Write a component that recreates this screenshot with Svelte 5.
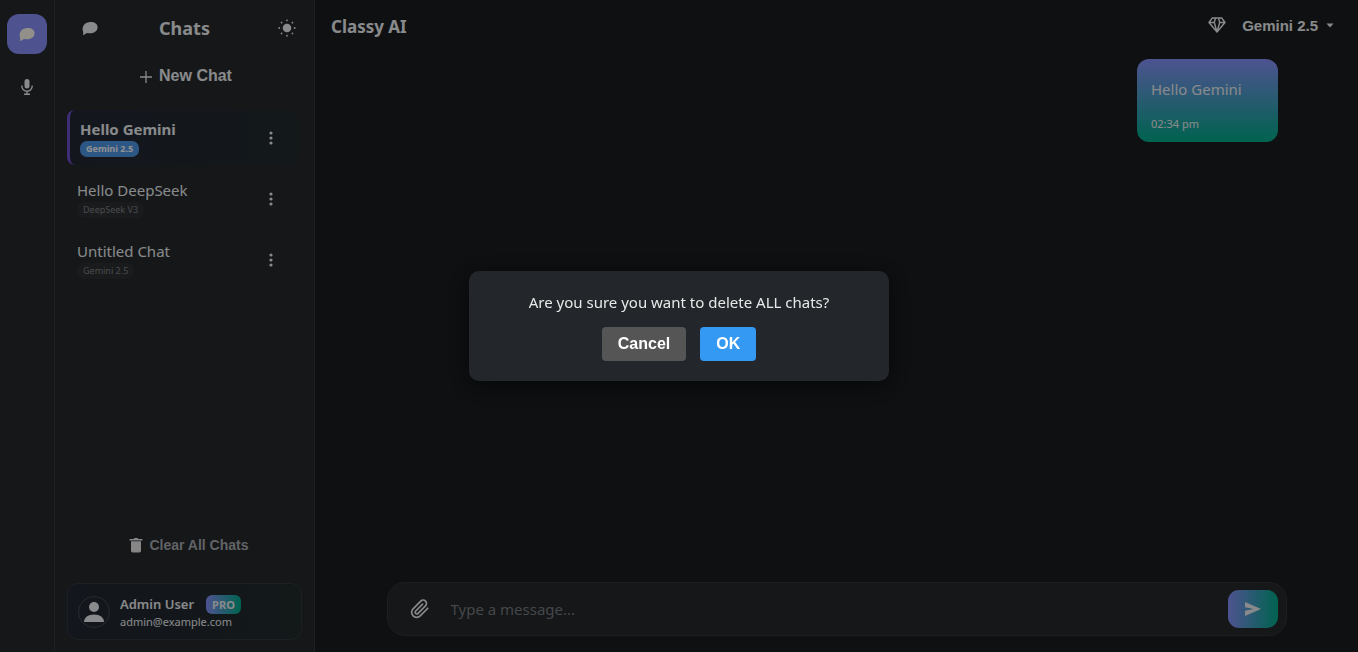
<script>
  const chats = [
    { title: 'Hello Gemini', model: 'Gemini 2.5', active: true },
    { title: 'Hello DeepSeek', model: 'DeepSeek V3', active: false },
    { title: 'Untitled Chat', model: 'Gemini 2.5', active: false }
  ];
  let draft = $state('');
</script>

{#snippet bubble()}
  <svg width="18" height="18" viewBox="0 0 18 18" aria-hidden="true">
    <path fill="currentColor" d="M9 3C13.200 2.600 16.600 4.700 16.600 8.200c0 3.600-3.300 6-7 6-1.200 0-2.400 0-3.500-.3L2 16.300c.3-1.300.3-2.400.1-3.500C.600 7.800 3 3.600 9 3z" />
  </svg>
{/snippet}

<div class="app">
  <nav class="rail">
    <button class="rail-btn on" aria-label="Chat">{@render bubble()}</button>
    <button class="rail-btn" aria-label="Voice">
      <svg width="14" height="18" viewBox="0 0 14 18" aria-hidden="true">
        <rect x="4.500" y="1" width="5" height="9.500" rx="2.500" fill="currentColor" />
        <path d="M1.800 7.500v.5a5.200 5.200 0 0 0 10.400 0v-.5M7 13v3M4 16.300h6" fill="none" stroke="currentColor" stroke-width="1.400" />
      </svg>
    </button>
  </nav>

  <aside class="side">
    <header class="side-head">
      <button class="icon" aria-label="Toggle chats">{@render bubble()}</button>
      <h2>Chats</h2>
      <button class="icon" aria-label="Light theme">
        <svg width="18" height="18" viewBox="0 0 18 18" fill="currentColor" aria-hidden="true">
          <circle cx="9" cy="9" r="4.300" />
          {#each [0, 45, 90, 135, 180, 225, 270, 315] as a}
            <circle cx="9" cy="1.300" r="0.900" transform="rotate({a} 9 9)" />
          {/each}
        </svg>
      </button>
    </header>
    <button class="new">
      <svg width="14" height="14" viewBox="0 0 14 14" aria-hidden="true"><path d="M7 1v12M1 7h12" stroke="currentColor" stroke-width="1.300" /></svg>
      New Chat
    </button>

    <ul class="chats">
      {#each chats as chat}
        <li class:active={chat.active}>
          <div class="info">
            <span class="title">{chat.title}</span>
            <span class="tag">{chat.model}</span>
          </div>
          <button class="more" aria-label="Chat options">
            <svg width="6" height="16" viewBox="0 0 6 16" fill="currentColor" aria-hidden="true">
              <circle cx="3" cy="3" r="1.600" /><circle cx="3" cy="8" r="1.600" /><circle cx="3" cy="13" r="1.600" />
            </svg>
          </button>
        </li>
      {/each}
    </ul>

    <button class="clear">
      <svg width="14" height="16" viewBox="0 0 14 16" fill="currentColor" aria-hidden="true">
        <path d="M0.500 2h4l1-1h3l1 1h4v1.500h-13zM2 4.200h10v9.600a1.700 1.700 0 0 1-1.700 1.700H3.700A1.700 1.700 0 0 1 2 13.800z" />
      </svg>
      Clear All Chats
    </button>

    <div class="user">
      <div class="avatar">
        <svg width="22" height="22" viewBox="0 0 22 22" fill="currentColor" aria-hidden="true">
          <circle cx="11" cy="6" r="5" /><path d="M1 21c0-4.500 4-7.500 10-7.500s10 3 10 7.500z" />
        </svg>
      </div>
      <div class="who">
        <div class="name">Admin User <span class="pro">PRO</span></div>
        <div class="mail">admin@example.com</div>
      </div>
    </div>
  </aside>

  <main>
    <header class="top">
      <h1>Classy AI</h1>
      <button class="model">
        <svg width="18" height="18" viewBox="0 0 18 18" fill="none" stroke="currentColor" stroke-width="1.400" stroke-linejoin="round" aria-hidden="true">
          <path d="M4.300 2h9.400l3.300 4.500L9 16 1 6.500zM1 6.500h5.300L9 16l2.700-9.500H17M6.300 6.500L7.500 2M11.700 6.500L10.500 2" />
        </svg>
        <span>Gemini 2.5</span>
        <svg width="8" height="5" viewBox="0 0 8 5" fill="currentColor" aria-hidden="true"><path d="M0.500 0.500h7L4 4.500z" /></svg>
      </button>
    </header>
    <section class="messages">
      <article class="msg">
        <p>Hello Gemini</p>
        <time>02:34 pm</time>
      </article>
    </section>
    <form class="composer" onsubmit={(e) => e.preventDefault()}>
      <button type="button" class="attach" aria-label="Attach file">
        <svg width="20" height="20" viewBox="0 0 24 24" fill="none" stroke="currentColor" stroke-width="2" stroke-linecap="round" stroke-linejoin="round" aria-hidden="true">
          <path d="M21.400 11.100l-9.200 9.200a6 6 0 0 1-8.500-8.500l9.200-9.200a4 4 0 0 1 5.700 5.700l-9.200 9.200a2 2 0 0 1-2.800-2.800l8.500-8.500" />
        </svg>
      </button>
      <input type="text" aria-label="Message" placeholder="Type a message..." bind:value={draft} />
      <button class="send" aria-label="Send">
        <svg width="18" height="16" viewBox="0 0 18 16" fill="currentColor" aria-hidden="true"><path d="M1 1l16 7-16 7V9.800L9.500 8 1 6.200z" /></svg>
      </button>
    </form>
  </main>
</div>

<div class="overlay">
  <div class="dialog" role="alertdialog" aria-modal="true" aria-labelledby="ask">
    <p id="ask">Are you sure you want to delete ALL chats?</p>
    <div class="actions">
      <button class="cancel">Cancel</button>
      <button class="ok">OK</button>
    </div>
  </div>
</div>

<style>
  :global(body) { margin: 0; background: #181b1d; }
  * { box-sizing: border-box; }
  h1, h2, p, ul { margin: 0; padding: 0; }
  button, input { border: 0; padding: 0; background: none; color: inherit; }
  button { display: flex; align-items: center; justify-content: center; cursor: pointer; font: bold 16px "Liberation Sans", Arial, sans-serif; }
  svg { display: block; flex: none; }
  .app { display: flex; height: 100vh; color: #e4e6e8; font: 15px/20px "Noto Sans", "Segoe UI", sans-serif; }

  .rail { width: 55px; flex: none; display: flex; flex-direction: column; align-items: center; gap: 13px; padding: 14px 8px 0 7px; background: #23272a; border-right: 1px solid #32363a; }
  .rail-btn { width: 40px; height: 40px; border-radius: 12px; }
  .on { background: #828af0; color: #f4efe8; }

  .side { width: 260px; flex: none; display: flex; flex-direction: column; padding: 14px 12px 12px; background: #23272a; border-right: 1px solid #32363a; }
  .side-head { display: grid; grid-template-columns: 1fr auto 1fr; align-items: center; height: 28px; padding: 0 6px 0 6px; }
  .side-head .icon:first-child { justify-self: start; padding-left: 8px; }
  .side-head .icon:last-child { justify-self: end; }
  h2 { font-size: 18px; line-height: 28px; }
  .new { gap: 6px; height: 20px; margin-top: 24px; padding-left: 2px; }
  .new svg { margin-top: 2px; }
  .chats { flex: 1; display: flex; flex-direction: column; gap: 6px; margin-top: 24px; list-style: none; }
  li { display: flex; align-items: center; justify-content: space-between; height: 55px; margin-right: 4px; padding: 0 24px 0 10px; border-radius: 8px; }
  li.active { border-left: 3px solid #6c4cc8; background: linear-gradient(90deg, #222632, #20282d); }
  .info { display: flex; flex-direction: column; align-items: flex-start; gap: 3px; padding-top: 2px; }
  .title { font-size: 15px; line-height: 18px; }
  .active .title { font-weight: 700; }
  .tag { padding: 0 6px; border-radius: 7px; background: #2b2e31; color: #7c7f82; font-size: 9px; line-height: 16px; }
  .active .tag { background: #4a8fdc; color: #f0f2f4; font-weight: 700; }
  .clear { gap: 6px; height: 20px; padding-left: 9px; font-size: 14px; color: #a2a6aa; }
  .clear svg { color: #e0e0e0; }
  .user { display: flex; align-items: center; gap: 10px; height: 57px; margin-top: 28px; padding: 0 10px; border: 1px solid #2e363b; border-radius: 11px; background: linear-gradient(90deg, #21262f, #20282b); }
  .avatar { width: 32px; height: 32px; display: grid; place-items: center; border: 1px solid #42464c; border-radius: 50%; }
  .who { padding-top: 2px; }
  .name { display: flex; align-items: center; gap: 12px; font-size: 13px; line-height: 19px; font-weight: 600; }
  .pro { padding: 0 6px; border-radius: 6px; background: linear-gradient(90deg, #828af0, #00a584); font-size: 11px; font-weight: 700; }
  .mail { font-size: 11px; line-height: 16px; }

  main { flex: 1; min-width: 0; display: flex; flex-direction: column; padding-bottom: 16px; background: #181b1d; }
  .top { display: flex; align-items: center; justify-content: space-between; height: 50px; padding: 0 24px 0 16px; }
  h1 { font-size: 17px; line-height: 24px; padding-top: 4px; }
  .model { gap: 8px; }
  .model span { padding-left: 8px; font-size: 15px; }
  .messages { flex: 1; display: flex; flex-direction: column; align-items: flex-end; padding: 9px 80px 0; }
  .msg { min-width: 141px; padding: 20px 14px 10px; border-radius: 12px; background: linear-gradient(#828af0, #00a584); }
  .msg p { margin-bottom: 16px; font-size: 15px; line-height: 21px; }
  .msg time { display: block; font-size: 11px; line-height: 16px; }
  .composer { display: flex; align-items: center; width: calc(100% - 140px); max-width: 900px; height: 54px; margin: 0 auto; padding: 0 8px 0 22px; border: 1px solid #2f3336; border-radius: 18px; background: #23272a; }
  .attach { width: 20px; height: 36px; }
  .composer input { flex: 1; min-width: 0; margin: 0 21px; outline: 0; font: 15px/20px "Noto Sans", "Segoe UI", sans-serif; }
  .composer input::placeholder { color: #74777a; opacity: 1; }
  .send { width: 50px; height: 38px; border-radius: 11px; background: linear-gradient(90deg, #828af0, #00a584); }

  .overlay { position: fixed; inset: 0; display: grid; place-items: center; background: rgba(0, 0, 0, 0.4); }
  .dialog { width: 420px; max-width: 90%; padding: 20px; border-radius: 10px; background: #23272b; color: #e8e8e8; box-shadow: 0 4px 24px rgba(0, 0, 0, 0.6); text-align: center; font: 15px/22px "Noto Sans", "Segoe UI", sans-serif; }
  .actions { display: flex; justify-content: center; gap: 14px; margin-top: 14px; }
  .actions button { height: 34px; padding: 0 16px; border-radius: 4px; color: #fff; }
  .cancel { background: #555; }
  .ok { background: #3399f3; }
</style>
